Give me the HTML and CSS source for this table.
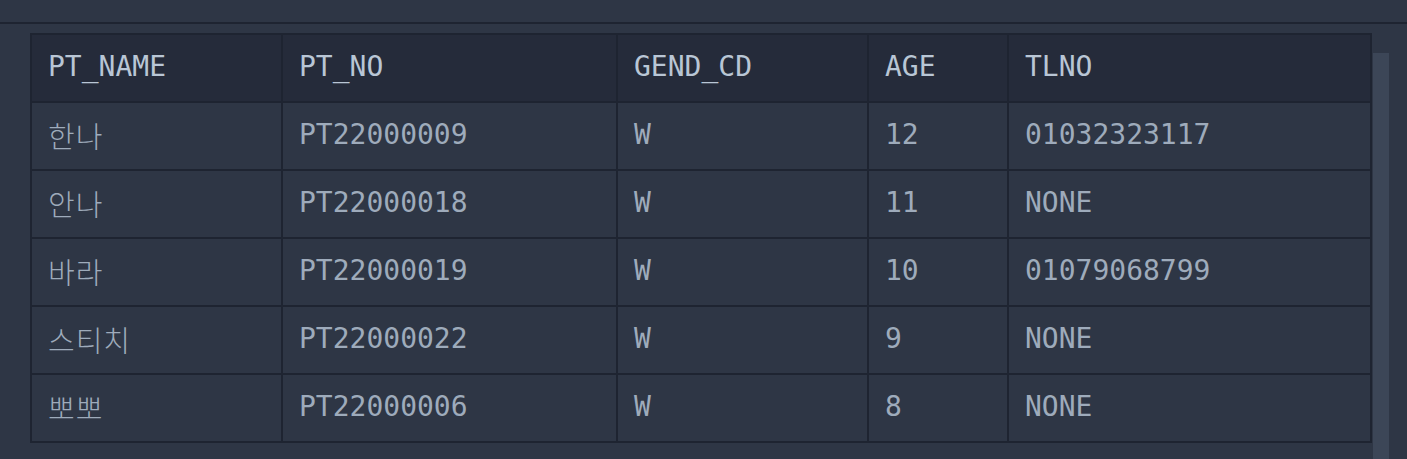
FILE: index.html
```html
<!DOCTYPE html>
<html lang="ko">
<head>
<meta charset="utf-8">
<title>Result</title>
<link rel="stylesheet" href="styles.css">
</head>
<body>
<div class="topbar"></div>
<div class="content">
  <table class="result">
    <colgroup>
      <col class="c1"><col class="c2"><col class="c3"><col class="c4"><col class="c5">
    </colgroup>
    <thead>
      <tr><th>PT_NAME</th><th>PT_NO</th><th>GEND_CD</th><th>AGE</th><th>TLNO</th></tr>
    </thead>
    <tbody>
      <tr><td class="ko">한나</td><td>PT22000009</td><td>W</td><td>12</td><td>01032323117</td></tr>
      <tr><td class="ko">안나</td><td>PT22000018</td><td>W</td><td>11</td><td>NONE</td></tr>
      <tr><td class="ko">바라</td><td>PT22000019</td><td>W</td><td>10</td><td>01079068799</td></tr>
      <tr><td class="ko">스티치</td><td>PT22000022</td><td>W</td><td>9</td><td>NONE</td></tr>
      <tr><td class="ko">뽀뽀</td><td>PT22000006</td><td>W</td><td>8</td><td>NONE</td></tr>
    </tbody>
  </table>
  <div class="scrollbar"></div>
</div>
</body>
</html>
```
FILE: styles.css
```css
html, body {
  margin: 0;
  padding: 0;
  background: #2e3645;
  height: 100%;
  overflow: hidden;
}
.topbar {
  height: 22px;
  border-bottom: 2px solid #1e2431;
}
.content {
  display: flex;
  align-items: flex-start;
  padding: 9px 0 0 30px;
}
.result {
  border-collapse: collapse;
  table-layout: fixed;
  width: 1340px;
  font-family: "DejaVu Sans Mono", "Noto Sans CJK KR", monospace;
  font-size: 28px;
}
.c1 { width: 251px; }
.c2 { width: 335px; }
.c3 { width: 251px; }
.c4 { width: 140px; }
.c5 { width: 363px; }
.result th, .result td {
  border: 2px solid #1e2431;
  height: 68px;
  padding: 0 0 3px 16px;
  text-align: left;
  font-weight: normal;
  white-space: nowrap;
  vertical-align: middle;
  box-sizing: border-box;
}
.result th {
  background: #252b3a;
  color: #b9c6d5;
}
.result td {
  background: #2e3645;
  color: #9eabbb;
}
.result td.ko {
  font-family: "Noto Sans CJK KR", sans-serif;
  font-weight: 300;
  font-size: 29px;
  letter-spacing: 1px;
  padding-bottom: 2px;
}
.scrollbar {
  width: 16px;
  height: 420px;
  margin-top: 20px;
  margin-left: 1px;
  background: #3c4657;
}
```
